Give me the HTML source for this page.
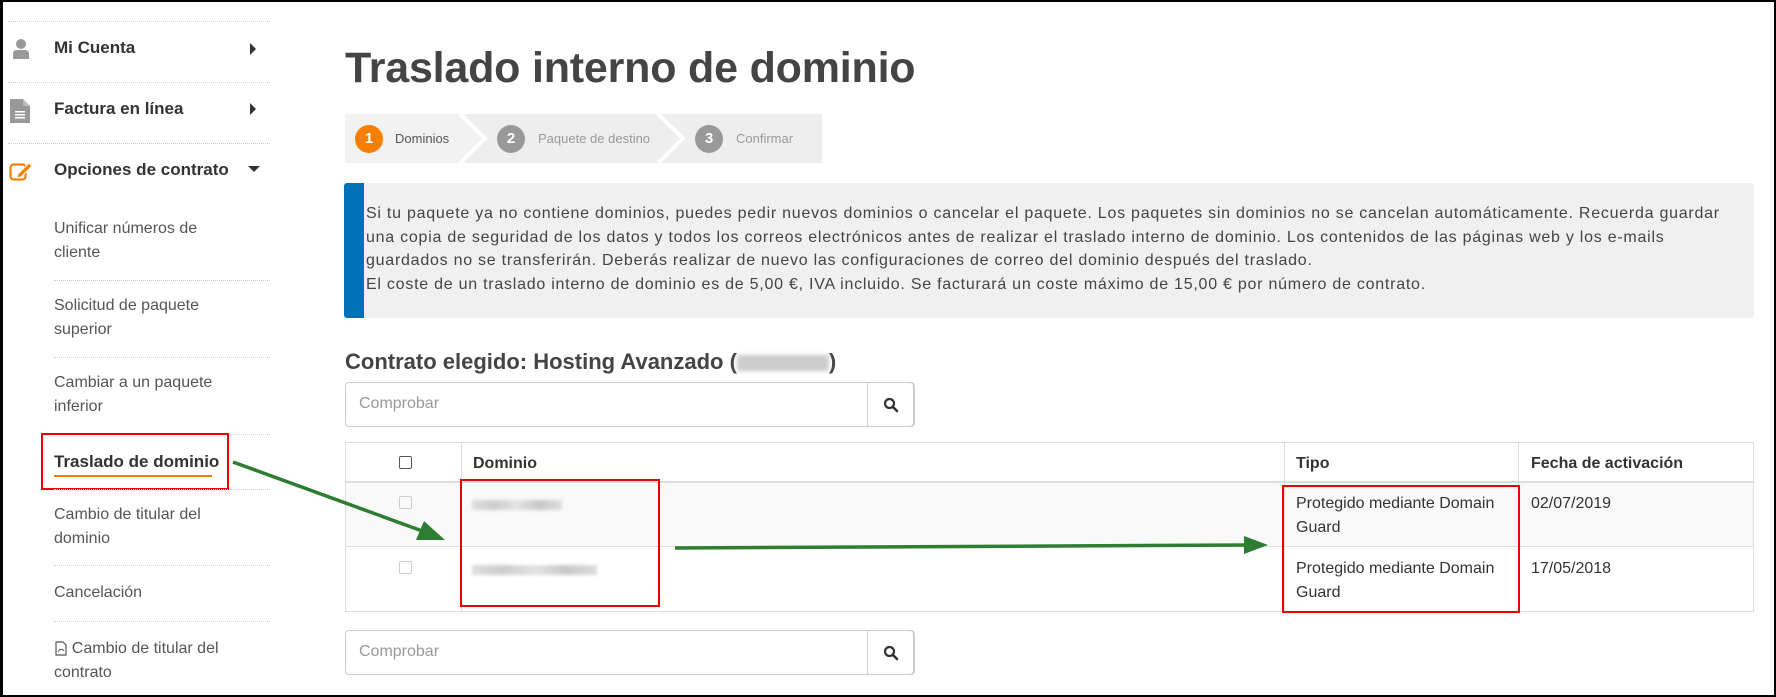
<!DOCTYPE html>
<html><head><meta charset="utf-8"><style>
*{box-sizing:border-box;margin:0;padding:0}
body{width:1776px;height:697px;overflow:hidden;background:#fff;font-family:"Liberation Sans",sans-serif;color:#333;position:relative}
.frame{position:absolute;left:0;top:0;width:1776px;height:697px;border:2px solid #000;border-left-width:3px;z-index:10;pointer-events:none}
.a{position:absolute}
.sep{position:absolute;left:8px;width:262px;border-top:1px dotted #ccc}
.sep2{position:absolute;left:54px;width:216px;border-top:1px dotted #ccc}
.mi{position:absolute;left:54px;font-size:17px;font-weight:bold;color:#333}
.si{position:absolute;left:54px;font-size:16px;color:#555;line-height:24px}
.tri{position:absolute;width:0;height:0}
.step{position:absolute;top:114px;height:49px;background:#eee}
.circ{position:absolute;top:11px;width:28px;height:28px;border-radius:50%;color:#fff;font-weight:bold;font-size:15px;text-align:center;line-height:28px}
.lbl{position:absolute;top:15px;font-size:13px;color:#999}
.inp{position:absolute;left:345px;width:570px;height:45px;border:1px solid #ccc;border-radius:4px}
.inp span{position:absolute;left:13px;top:12px;font-size:16px;color:#999}
.inp .btn{position:absolute;right:0;top:-1px;width:47px;height:45px;border:1px solid #ccc;border-radius:0 4px 4px 0;background:#fff}
.line{position:absolute;background:#ddd}
.cell{position:absolute;font-size:16px;color:#333;line-height:24px}
.blur{position:absolute;height:10px;background:linear-gradient(90deg,#ddd,#ccc,#e3e3e3,#c8c8c8,#ddd);filter:blur(1.5px)}
</style></head><body>
<div class="frame"></div>

<div class="sep" style="top:21px"></div>
<div class="sep" style="top:82px"></div>
<div class="sep" style="top:143px"></div>
<svg class="a" style="left:12px;top:38px" width="18" height="22" viewBox="0 0 18 22"><circle cx="9" cy="6" r="5" fill="#999"/><path d="M1 21 V16 Q1 12 5 12 H13 Q17 12 17 16 V21Z" fill="#999"/></svg>
<div class="mi" style="top:38px">Mi Cuenta</div>
<div class="tri" style="left:250px;top:43px;border-left:6px solid #333;border-top:6px solid transparent;border-bottom:6px solid transparent"></div>
<svg class="a" style="left:10px;top:99px" width="20" height="24" viewBox="0 0 20 24"><path d="M0 0H13L20 7V24H0Z" fill="#999"/><path d="M13 0V7H20" fill="#bbb"/><rect x="5" y="12" width="10" height="1.5" fill="#fff"/><rect x="5" y="15" width="10" height="1.5" fill="#fff"/><rect x="5" y="18" width="10" height="1.5" fill="#fff"/></svg>
<div class="mi" style="top:99px">Factura en línea</div>
<div class="tri" style="left:250px;top:103px;border-left:6px solid #333;border-top:6px solid transparent;border-bottom:6px solid transparent"></div>
<svg class="a" style="left:9px;top:160px" width="24" height="22" viewBox="0 0 24 22"><rect x="1.5" y="4.5" width="15" height="15" rx="3" fill="none" stroke="#f77f00" stroke-width="2.2"/><path d="M9 14 L20 3 L23 6 L12 17 L8 18Z" fill="#f77f00" stroke="#fff" stroke-width="1"/></svg>
<div class="mi" style="top:160px">Opciones de contrato</div>
<div class="tri" style="left:248px;top:166px;border-top:6px solid #333;border-left:6px solid transparent;border-right:6px solid transparent"></div>

<div class="si" style="top:217px">Unificar números de<br>cliente</div>
<div class="sep2" style="top:280px"></div>
<div class="si" style="top:294px">Solicitud de paquete<br>superior</div>
<div class="sep2" style="top:357px"></div>
<div class="si" style="top:371px">Cambiar a un paquete<br>inferior</div>
<div class="sep2" style="top:434px"></div>
<div class="si" style="top:450px;font-weight:bold;color:#333;font-size:17px">Traslado de dominio</div>
<div class="a" style="left:54px;top:475px;width:158px;height:2px;background:#f77f00"></div>
<div class="a" style="left:41px;top:433px;width:188px;height:57px;border:2px solid #e00"></div>
<div class="sep2" style="top:489px"></div>
<div class="si" style="top:503px">Cambio de titular del<br>dominio</div>
<div class="sep2" style="top:565px"></div>
<div class="si" style="top:581px">Cancelación</div>
<div class="sep2" style="top:621px"></div>
<svg class="a" style="left:55px;top:641px" width="12" height="15" viewBox="0 0 12 15"><path d="M1 1H8L11 4V14H1Z" fill="none" stroke="#555" stroke-width="1.2"/><path d="M3 11 Q6 6 9 10" fill="none" stroke="#555"/></svg>
<div class="si" style="top:637px">&nbsp;&nbsp;&nbsp;&nbsp;Cambio de titular del<br>contrato</div>

<div class="a" style="left:345px;top:44px;font-size:43px;font-weight:bold;color:#444;letter-spacing:-0.2px">Traslado interno de dominio</div>

<div class="step" style="left:345px;width:477px;background:#eee"></div>
<div class="step" style="left:345px;width:120px;background:#f2f2f2"></div>
<svg class="a" style="left:345px;top:114px" width="477" height="49"><path d="M115 0 L140 24.5 L115 49" fill="#f2f2f2" stroke="#fff" stroke-width="4"/><path d="M313 0 L338 24.5 L313 49" fill="none" stroke="#fff" stroke-width="4"/></svg>
<div class="circ" style="left:355px;top:125px;background:#f77f00">1</div>
<div class="lbl" style="left:395px;top:131px;color:#555">Dominios</div>
<div class="circ" style="left:497px;top:125px;background:#999">2</div>
<div class="lbl" style="left:538px;top:131px">Paquete de destino</div>
<div class="circ" style="left:695px;top:125px;background:#999">3</div>
<div class="lbl" style="left:736px;top:131px">Confirmar</div>

<div class="a" style="left:344px;top:183px;width:1410px;height:135px;background:#f0f0f0;border-radius:3px"></div>
<div class="a" style="left:344px;top:183px;width:20px;height:135px;background:#0070b8;border-radius:3px 0 0 3px"></div>
<div class="a" style="left:366px;top:202px;width:1370px;font-size:16px;letter-spacing:0.75px;line-height:23.5px;color:#444">Si tu paquete ya no contiene dominios, puedes pedir nuevos dominios o cancelar el paquete. Los paquetes sin dominios no se cancelan automáticamente. Recuerda guardar una copia de seguridad de los datos y todos los correos electrónicos antes de realizar el traslado interno de dominio. Los contenidos de las páginas web y los e-mails guardados no se transferirán. Deberás realizar de nuevo las configuraciones de correo del dominio después del traslado.<br>El coste de un traslado interno de dominio es de 5,00 €, IVA incluido. Se facturará un coste máximo de 15,00 € por número de contrato.</div>

<div class="a" style="left:345px;top:349px;font-size:22px;font-weight:bold;color:#444">Contrato elegido: Hosting Avanzado (<span style="display:inline-block;width:92px;height:16px;background:#ccc;filter:blur(2px);vertical-align:middle"></span>)</div>

<div class="inp" style="top:382px"><span>Comprobar</span><div class="btn"><svg style="position:absolute;left:15px;top:14px" width="16" height="16" viewBox="0 0 16 16"><circle cx="6.5" cy="6.5" r="4.5" fill="none" stroke="#333" stroke-width="2.2"/><path d="M10 10L14 14" stroke="#333" stroke-width="2.6" stroke-linecap="round"/></svg></div></div>

<div class="a" style="left:345px;top:482px;width:1409px;height:64px;background:#f9f9f9"></div>
<div class="line" style="left:345px;top:442px;width:1409px;height:1px"></div>
<div class="line" style="left:345px;top:481px;width:1409px;height:2px"></div>
<div class="line" style="left:345px;top:546px;width:1409px;height:1px"></div>
<div class="line" style="left:345px;top:611px;width:1409px;height:1px"></div>
<div class="line" style="left:345px;top:442px;width:1px;height:170px"></div>
<div class="line" style="left:461px;top:442px;width:1px;height:170px"></div>
<div class="line" style="left:1284px;top:442px;width:1px;height:170px"></div>
<div class="line" style="left:1518px;top:442px;width:1px;height:170px"></div>
<div class="line" style="left:1753px;top:442px;width:1px;height:170px"></div>
<div class="a" style="left:399px;top:456px;width:13px;height:13px;border:1px solid #555;border-radius:2px"></div>
<div class="a" style="left:399px;top:496px;width:13px;height:13px;border:1px solid #ccc;border-radius:2px"></div>
<div class="a" style="left:399px;top:561px;width:13px;height:13px;border:1px solid #ccc;border-radius:2px"></div>
<div class="cell" style="left:473px;top:452px;font-weight:bold">Dominio</div>
<div class="cell" style="left:1296px;top:452px;font-weight:bold">Tipo</div>
<div class="cell" style="left:1531px;top:452px;font-weight:bold">Fecha de activación</div>
<div class="blur" style="left:472px;top:500px;width:90px"></div>
<div class="blur" style="left:472px;top:565px;width:125px"></div>
<div class="cell" style="left:1296px;top:492px">Protegido mediante Domain<br>Guard</div>
<div class="cell" style="left:1531px;top:492px">02/07/2019</div>
<div class="cell" style="left:1296px;top:557px">Protegido mediante Domain<br>Guard</div>
<div class="cell" style="left:1531px;top:557px">17/05/2018</div>
<div class="a" style="left:460px;top:479px;width:200px;height:128px;border:2px solid #e00"></div>
<div class="a" style="left:1282px;top:485px;width:238px;height:128px;border:2px solid #e00"></div>

<svg class="a" style="left:0;top:0;z-index:5" width="1776" height="697"><path d="M233 462 L425 532" stroke="#2e7d32" stroke-width="3.5"/><path d="M445 540 L416 540 L424 521Z" fill="#2e7d32"/><path d="M675 548 L1248 545" stroke="#2e7d32" stroke-width="3.5"/><path d="M1268 545 L1244 536 L1244 554Z" fill="#2e7d32"/></svg>

<div class="inp" style="top:630px"><span>Comprobar</span><div class="btn"><svg style="position:absolute;left:15px;top:14px" width="16" height="16" viewBox="0 0 16 16"><circle cx="6.5" cy="6.5" r="4.5" fill="none" stroke="#333" stroke-width="2.2"/><path d="M10 10L14 14" stroke="#333" stroke-width="2.6" stroke-linecap="round"/></svg></div></div>
</body></html>
